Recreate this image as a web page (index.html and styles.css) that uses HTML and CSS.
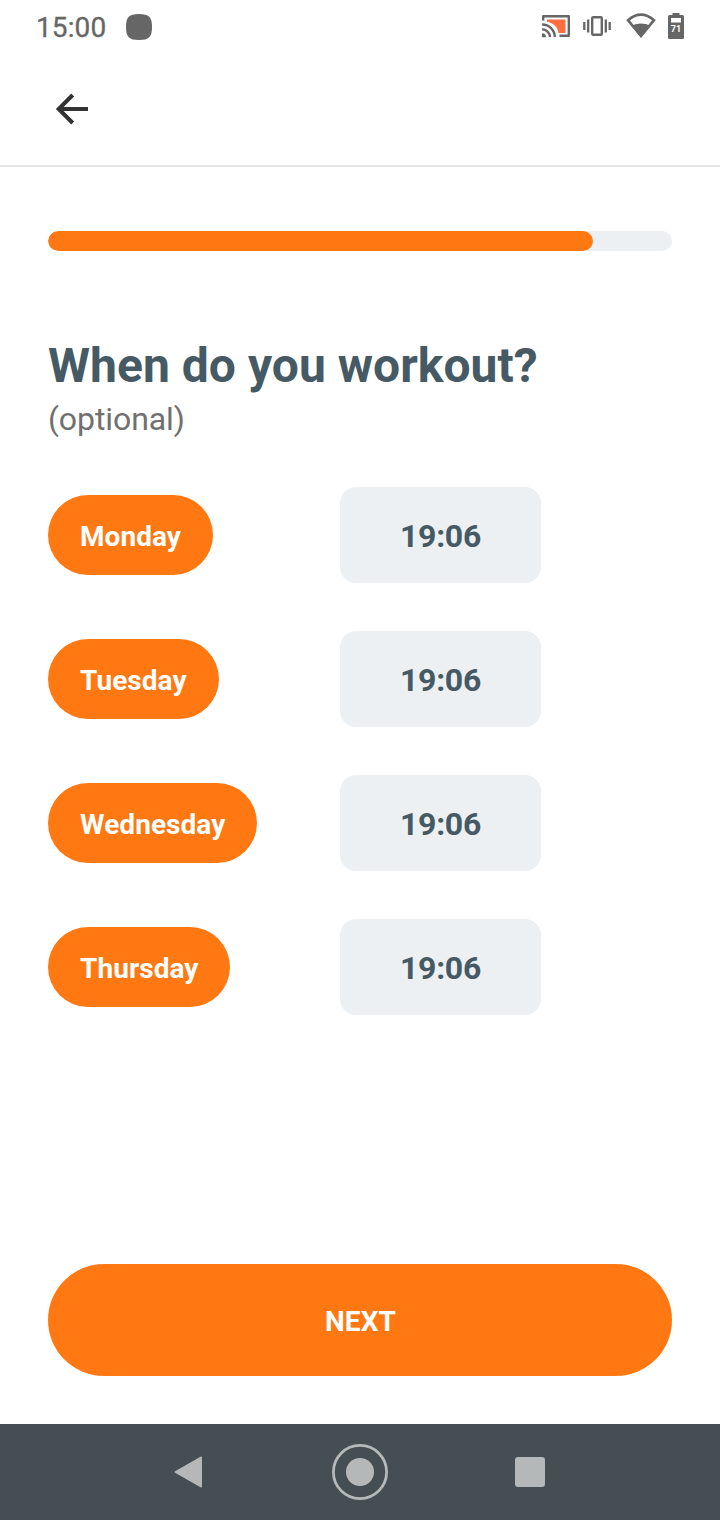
FILE: index.html
```html
<!DOCTYPE html>
<html lang="en">
<head>
    <meta charset="UTF-8">
    <meta name="viewport" content="width=device-width,initial-scale=1">
    <title>Workout schedule</title>
    <link rel="stylesheet" href="styles.css">
</head>
<body>
<!-- System status bar -->
<div class="status-bar">
    <span class="clock">15:00</span>
    <svg class="notif" width="26" height="26" viewBox="0 0 26 26"><path d="M13 0C23 0 26 3 26 13S23 26 13 26 0 23 0 13 3 0 13 0Z"/></svg>
    <svg class="status-icons" width="144" height="28" viewBox="541 12 144 28" aria-hidden="true">
        <!-- cast -->
        <path class="cast-fill" d="M547 19.500H565.500V33H558.500C557.500 27 553.500 23 547 21.800Z"/>
        <path class="line" d="M543.200 20.500V16.200H568.800V35.800H559.500M542 24.500A12.500 12.500 0 0 1 554.800 37M542 29.400A7.600 7.600 0 0 1 549.900 37" stroke-width="2.400" stroke-linejoin="round"/>
        <path d="M542 33.200A4 4 0 0 1 546 37.200H542Z"/>
        <!-- vibrate -->
        <rect class="line" x="592.200" y="17.200" width="9.600" height="17.600" rx="1" stroke-width="2.400"/>
        <path class="line" d="M588.200 19.500V32.500M605.800 19.500V32.500M584.300 22V30M609.700 22V30" stroke-width="2.300"/>
        <!-- wifi -->
        <path class="line" d="M628 20.200Q641 9.200 654 20.200L641 36Z" stroke-width="2.600" stroke-linejoin="miter"/>
        <path d="M631.500 25.800Q641 21 650.500 25.800L641 37.500Z"/>
        <!-- battery -->
        <path d="M672.500 13H679.500V15H682.500Q684 15 684 16.500V37.500Q684 39 682.500 39H669.500Q668 39 668 37.500V16.500Q668 15 669.500 15H672.500Z"/>
        <rect class="gap" x="671" y="18" width="10" height="4.500"/>
        <text class="level" x="676" y="32" text-anchor="middle">71</text>
    </svg>
</div>

<header class="top-bar">
    <button class="back" aria-label="Back">
        <svg width="34" height="34" viewBox="0 0 34 34"><path d="M33 17H4.500M17.700 3L3.700 17L17.700 31"/></svg>
    </button>
</header>

<main>
    <div class="progress"><div class="progress-fill"></div></div>

    <h1>When do you workout?</h1>
    <p class="hint">(optional)</p>

    <div class="days">
        <div class="day-row">
            <button class="day">Monday</button>
            <button class="time">19:06</button>
        </div>
        <div class="day-row">
            <button class="day">Tuesday</button>
            <button class="time">19:06</button>
        </div>
        <div class="day-row">
            <button class="day">Wednesday</button>
            <button class="time">19:06</button>
        </div>
        <div class="day-row">
            <button class="day">Thursday</button>
            <button class="time">19:06</button>
        </div>
    </div>

    <button class="next">NEXT</button>
</main>

<!-- Android navigation -->
<nav class="nav-bar">
    <svg width="60" height="60" viewBox="0 0 60 60"><path d="M15.500 30L41 15.500V44.500Z" stroke-width="2" stroke-linejoin="round"/></svg>
    <svg width="60" height="60" viewBox="0 0 60 60"><circle class="ring" cx="30" cy="30" r="26.600"/><circle cx="30" cy="30" r="14"/></svg>
    <svg width="60" height="60" viewBox="0 0 60 60"><rect x="15" y="15" width="30" height="30" rx="3"/></svg>
</nav>
</body>
</html>
```
FILE: styles.css
```css
:root{
    --c-accent:#ff7811;
    --c-surface:#ecf0f3;
    --c-text:#455a64;
    --c-muted:#707070;
    --c-status:#666;
}
*{box-sizing:border-box;padding:0;margin:0;font-family:Roboto,sans-serif}
body{background:#fff;color:var(--c-text);display:flex;flex-direction:column;height:1520px}
button{border:none;background:none;cursor:pointer}
svg{display:block}

.status-bar{height:54px;padding:0 35px 0 36px;display:flex;align-items:center;color:var(--c-status);fill:var(--c-status)}
.clock{width:70px;font-size:28px;font-weight:400;letter-spacing:.1px;-webkit-text-stroke:.3px var(--c-status)}
.notif{margin-left:20px}
.status-icons{margin-left:auto;margin-bottom:2px}
.line{fill:none;stroke:var(--c-status)}
.cast-fill{fill:#ff6e40}
.gap{fill:#fff}
.level{font-size:9px;font-weight:700;fill:#fff}

.top-bar{height:113px;padding:0 55px 2px;display:flex;align-items:center;border-bottom:2px solid #e4e4e4}
.back svg{fill:none;stroke:#323232;stroke-width:4}

main{flex:1;padding:64px 48px 48px;display:flex;flex-direction:column}
.progress{height:20px;border-radius:10px;background:var(--c-surface);overflow:hidden}
.progress-fill{width:87.4%;height:100%;border-radius:10px;background:var(--c-accent)}
h1{margin-top:87px;font-size:48px;line-height:56px;font-weight:700;letter-spacing:.03px}
.hint{margin-top:6px;font-size:32px;line-height:38px;letter-spacing:-.08px;color:var(--c-muted)}

.days{margin-top:49px;display:grid;gap:48px}
.day-row{display:grid;grid-template-columns:292px 201px;align-items:center}
.day{justify-self:start;height:80px;padding:2px 32px 0;border-radius:40px;background:var(--c-accent);color:#fff;font-size:28px;font-weight:700;letter-spacing:.06px}
.time{height:96px;padding-top:2px;border-radius:16px;background:var(--c-surface);color:var(--c-text);font-size:32px;font-weight:700;letter-spacing:-.3px}
.next{margin-top:auto;height:112px;padding:2px 0 0 1px;border-radius:56px;background:var(--c-accent);color:#fff;font-size:28px;font-weight:700;letter-spacing:.1px}

.nav-bar{height:96px;padding:0 160px;display:flex;align-items:center;justify-content:space-between;background:#454e53;fill:#b4b8b9;stroke:none}
.nav-bar path{stroke:#b4b8b9}
.ring{fill:none;stroke:#b4b8b9;stroke-width:2.8}
```
